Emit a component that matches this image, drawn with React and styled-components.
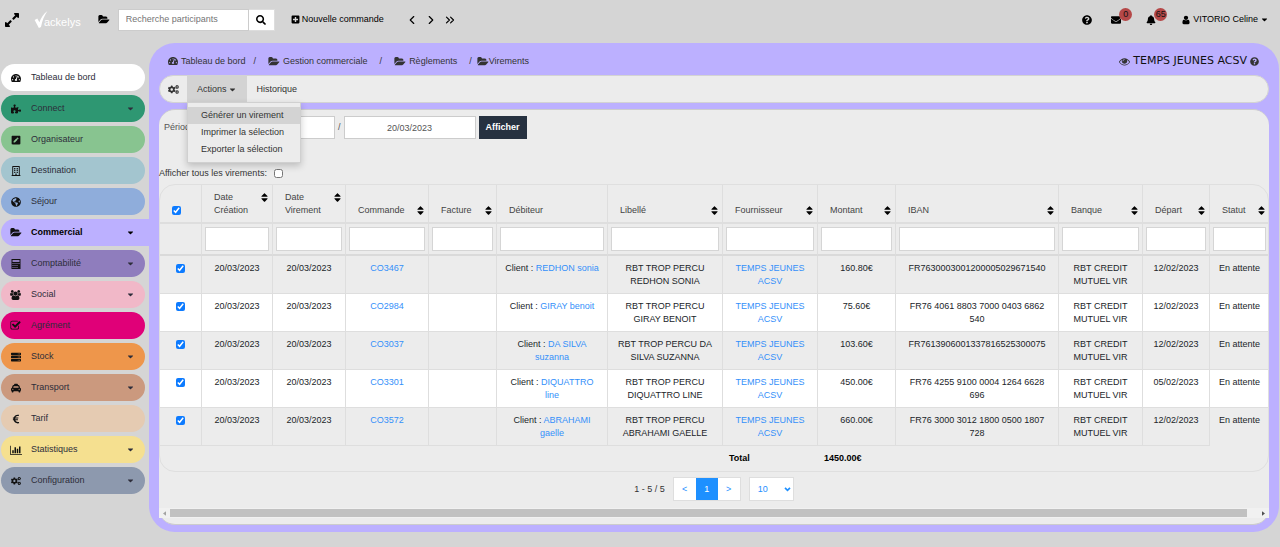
import styled, { createGlobalStyle, css } from 'styled-components'
import { ChevronLeft, ChevronRight, ChevronsRight } from 'lucide-react'
import {
  FaExpandAlt, FaSearch, FaPlusSquare, FaQuestionCircle, FaEnvelope, FaBell, FaCogs,
  FaTachometerAlt, FaPuzzlePiece, FaPenSquare, FaRegBuilding, FaGlobeAmericas,
  FaServer, FaTaxi, FaEuroSign, FaSort, FaCaretDown
} from 'react-icons/fa'

const BarChartIcon = () => (
  <svg viewBox="0 0 2048 1792" width="12" height="11" fill="currentColor" aria-hidden="true">
    <path d="M640 1024v512H384v-512h256zm384-512v1024H768V512h256zm1024 1152v128H0V256h128v1408h1920zm-640-896v768h-256V768h256zm384-384v1152h-256V384h256z" />
  </svg>
)

const CheckSquareIcon = () => (
  <svg viewBox="0 0 1792 1792" width="11" height="11" fill="currentColor" aria-hidden="true">
    <path d="M1472 930v318q0 119-84.5 203.5t-203.5 84.5h-832q-119 0-203.5-84.5t-84.5-203.5v-832q0-119 84.5-203.5t203.5-84.5h832q63 0 117 25 15 7 18 23 3 17-9 29l-49 49q-10 10-23 10-3 0-9-2-23-6-45-6h-832q-66 0-113 47t-47 113v832q0 66 47 113t113 47h832q66 0 113-47t47-113v-254q0-13 9-22l64-64q10-10 23-10 6 0 12 3 20 8 20 29zm231-489l-814 814q-24 24-57 24t-57-24l-430-430q-24-24-24-57t24-57l110-110q24-24 57-24t57 24l263 263 647-647q24-24 57-24t57 24l110 110q24 24 24 57t-24 57z" />
  </svg>
)

const EyeIcon = () => (
  <svg viewBox="0 0 1792 1792" width="11" height="11" fill="currentColor" aria-hidden="true">
    <path d="M1664 960q-152-236-381-353 61 104 61 225 0 185-131.5 316.5t-316.5 131.5-316.5-131.5-131.5-316.5q0-121 61-225-229 117-381 353 133 205 333.5 326.5t434.5 121.5 434.5-121.5 333.5-326.5zm-720-384q0-20-14-34t-34-14q-125 0-214.5 89.5t-89.5 214.5q0 20 14 34t34 14 34-14 14-34q0-86 61-147t147-61q20 0 34-14t14-34zm848 384q0 34-20 69-140 230-376.5 368.5t-499.5 138.5-499.5-139-376.5-368q-20-35-20-69t20-69q140-229 376.5-368t499.5-139 499.5 139 376.5 368q20 35 20 69z" />
  </svg>
)

const FolderIcon = () => (
  <svg viewBox="0 0 2048 1792" width="12" height="11" fill="currentColor" aria-hidden="true">
    <path d="M1943 952q0 31-31 66l-336 396q-43 51-120.5 86.5t-143.5 35.5h-1088q-34 0-60.5-13t-26.5-43q0-31 31-66l336-396q43-51 120.5-86.5t143.5-35.5h1088q34 0 60.5 13t26.5 43zm-343-344v160h-832q-94 0-197 47.5t-164 119.5l-337 396-5 6q0-4-.5-12.5t-.5-12.5v-960q0-92 66-158t158-66h320q92 0 158 66t66 158v32h544q92 0 158 66t66 158z" />
  </svg>
)

const UsersIcon = () => (
  <svg viewBox="0 0 1920 1792" width="11" height="10" fill="currentColor" aria-hidden="true">
    <path d="M593 896q-162 5-265 128H194q-82 0-138-40.5T0 865q0-353 124-353 6 0 43.5 21t97.5 42.5T384 597q67 0 133-23-5 37-5 66 0 139 81 256zm1071 637q0 120-73 189.5t-194 69.5H523q-121 0-194-69.5T256 1533q0-53 3.5-103.5t14-109T300 1212t43-97.5 62-81 85.5-53.5T602 960q10 0 43 21.5t73 48 107 48 135 21.5 135-21.5 107-48 73-48 43-21.5q61 0 111.5 20t85.5 53.5 62 81 43 97.5 26.5 108.5 14 109 3.5 103.5zM640 256q0 106-75 181t-181 75-181-75-75-181 75-181T384 0t181 75 75 181zm704 384q0 159-112.5 271.5T960 1024 688.5 911.5 576 640t112.5-271.5T960 256t271.5 112.5T1344 640zm576 225q0 78-56 118.5t-138 40.5h-134q-103-123-265-128 81-117 81-256 0-29-5-66 66 23 133 23 59 0 119-21.5t97.5-42.5 43.5-21q124 0 124 353zm-128-609q0 106-75 181t-181 75-181-75-75-181 75-181 181-75 181 75 75 181z" />
  </svg>
)

const UserIcon = () => (
  <svg viewBox="0 0 1792 1792" width="10" height="10" fill="currentColor" aria-hidden="true">
    <path d="M1536 1399q0 109-62.5 187t-150.5 78h-854q-88 0-150.5-78t-62.5-187q0-85 8.5-160.5t31.5-152 58.5-131 94-89 134.5-34.5q131 128 313 128t313-128q76 0 134.5 34.5t94 89 58.5 131 31.5 152 8.5 160.5zm-256-887q0 159-112.5 271.5t-271.5 112.5-271.5-112.5-112.5-271.5 112.5-271.5 271.5-112.5 271.5 112.5 112.5 271.5z" />
  </svg>
)

const CalculatorIcon = () => (
  <svg viewBox="0 0 20 20" width="10" height="10" aria-hidden="true">
    <path
      fill="currentColor"
      fillRule="evenodd"
      d="M1 0h18v20H1zM3 2v4h14V2zM3 8v2h2V8zm4 0v2h2V8zm4 0v2h2V8zM3 12v2h2v-2zm4 0v2h2v-2zm4 0v2h2v-2zM3 16v2h2v-2zm4 0v2h2v-2zm4 0v2h2v-2zM15 8v2h2V8z"
    />
  </svg>
)

const menu = [
  { label: 'Tableau de bord', icon: FaTachometerAlt, color: '#ffffff' },
  { label: 'Connect', icon: FaPuzzlePiece, color: '#2e9772', sub: true },
  { label: 'Organisateur', icon: FaPenSquare, color: '#88c490' },
  { label: 'Destination', icon: FaRegBuilding, color: '#a3c5cf' },
  { label: 'Séjour', icon: FaGlobeAmericas, color: '#8faddb' },
  { label: 'Commercial', icon: FolderIcon, color: '#bcb0ff', sub: true, active: true },
  { label: 'Comptabilité', icon: CalculatorIcon, color: '#8f7dbd', sub: true },
  { label: 'Social', icon: UsersIcon, color: '#f1b8c8', sub: true },
  { label: 'Agrément', icon: CheckSquareIcon, color: '#e00078' },
  { label: 'Stock', icon: FaServer, color: '#ee964b', sub: true },
  { label: 'Transport', icon: FaTaxi, color: '#cb997e', sub: true },
  { label: 'Tarif', icon: FaEuroSign, color: '#e5cbb2' },
  { label: 'Statistiques', icon: BarChartIcon, color: '#f5e090', sub: true },
  { label: 'Configuration', icon: FaCogs, color: '#8d99ae', sub: true }
]

const columns = [
  { label: 'Date Création', width: 71, sort: true },
  { label: 'Date Virement', width: 73, sort: true },
  { label: 'Commande', width: 83, sort: true },
  { label: 'Facture', width: 68, sort: true },
  { label: 'Débiteur', width: 111 },
  { label: 'Libellé', width: 115, sort: true },
  { label: 'Fournisseur', width: 95, sort: true },
  { label: 'Montant', width: 78, sort: true },
  { label: 'IBAN', width: 163, sort: true },
  { label: 'Banque', width: 84, sort: true },
  { label: 'Départ', width: 67, sort: true },
  { label: 'Statut', width: 59, sort: true }
]

const rows = [
  { order: 'CO3467', client: 'REDHON sonia', label: 'RBT TROP PERCU REDHON SONIA', amount: '160.80€', iban: 'FR7630003001200005029671540', start: '12/02/2023' },
  { order: 'CO2984', client: 'GIRAY benoit', label: 'RBT TROP PERCU GIRAY BENOIT', amount: '75.60€', iban: 'FR76 4061 8803 7000 0403 6862 540', start: '12/02/2023' },
  { order: 'CO3037', client: 'DA SILVA suzanna', label: 'RBT TROP PERCU DA SILVA SUZANNA', amount: '103.60€', iban: 'FR7613906001337816525300075', start: '12/02/2023' },
  { order: 'CO3301', client: 'DIQUATTRO line', label: 'RBT TROP PERCU DIQUATTRO LINE', amount: '450.00€', iban: 'FR76 4255 9100 0004 1264 6628 696', start: '05/02/2023' },
  { order: 'CO3572', client: 'ABRAHAMI gaelle', label: 'RBT TROP PERCU ABRAHAMI GAELLE', amount: '660.00€', iban: 'FR76 3000 3012 1800 0500 1807 728', start: '12/02/2023' }
]

export default function App() {
  return (
    <>
      <GlobalStyle />
      <TopBar />
      <Layout>
        <Sidebar>
          {menu.map(({ label, icon: Icon, color, sub, active }) => (
            <MenuLink key={label} href="#" $color={color} $active={active}>
              <MenuIcon><Icon /></MenuIcon>
              <MenuLabel>{label}</MenuLabel>
              {sub && <FaCaretDown size={9} />}
            </MenuLink>
          ))}
        </Sidebar>
        <Panel>
          <PanelHead>
            <Breadcrumb>
              <a href="#"><FaTachometerAlt size={10} /> Tableau de bord</a>
              <Slash>/</Slash>
              <a href="#"><FolderIcon /> Gestion commerciale</a>
              <Slash $wide>/</Slash>
              <a href="#"><FolderIcon /> Règlements</a>
              <Slash $wide $tight>/</Slash>
              <Current><FolderIcon />Virements</Current>
            </Breadcrumb>
            <Structure>
              <EyeIcon />
              <strong>TEMPS JEUNES ACSV</strong>
              <FaQuestionCircle size={9} />
            </Structure>
          </PanelHead>
          <Toolbar />
          <Transfers />
        </Panel>
      </Layout>
    </>
  )
}

function TopBar() {
  return (
    <Header>
      <IconButton aria-label="Plein écran"><FaExpandAlt size={16} /></IconButton>
      <Logo href="#">
        <svg viewBox="0 0 26 32" width="14" height="17" aria-hidden="true">
          <path d="M1 17l5-3 4 7C13 13 18 5 25 0c-6 9-10 19-12 30l-4 2z" fill="#fff" />
        </svg>
        <span>ackelys</span>
      </Logo>
      <IconButton aria-label="Dossiers"><FolderIcon /></IconButton>
      <Search>
        <input type="text" aria-label="Recherche participants" placeholder="Recherche participants" />
        <button aria-label="Rechercher"><FaSearch size={10} /></button>
      </Search>
      <NewOrder href="#"><FaPlusSquare size={9} />Nouvelle commande</NewOrder>
      <Arrows>
        <IconButton aria-label="Précédent"><ChevronLeft size={14} /></IconButton>
        <IconButton aria-label="Suivant"><ChevronRight size={14} /></IconButton>
        <IconButton aria-label="Dernier"><ChevronsRight size={14} /></IconButton>
      </Arrows>
      <UserZone>
        <IconButton aria-label="Aide"><FaQuestionCircle size={10} /></IconButton>
        <IconButton aria-label="Messages"><FaEnvelope size={10} /><Badge>0</Badge></IconButton>
        <IconButton $apart aria-label="Notifications"><FaBell size={10} /><Badge>65</Badge></IconButton>
        <UserButton><UserIcon />VITORIO Celine<FaCaretDown size={9} /></UserButton>
      </UserZone>
    </Header>
  )
}

function Toolbar() {
  return (
    <Bar>
      <BarButton $icon aria-label="Paramètres"><FaCogs size={11} /></BarButton>
      <MenuAnchor>
        <BarButton $open>Actions <FaCaretDown size={9} /></BarButton>
        <DropDown>
          <DropItem $selected>Générer un virement</DropItem>
          <DropItem>Imprimer la sélection</DropItem>
          <DropItem>Exporter la sélection</DropItem>
        </DropDown>
      </MenuAnchor>
      <BarButton>Historique</BarButton>
    </Bar>
  )
}

function Transfers() {
  return (
    <Content>
      <Period>
        <label htmlFor="from">Période :</label>
        <DateInput id="from" defaultValue="" />
        <span>/</span>
        <DateInput aria-label="Fin de période" defaultValue="20/03/2023" />
        <Submit>Afficher</Submit>
      </Period>
      <ShowAll>
        Afficher tous les virements: <Check />
      </ShowAll>
      <TableFrame>
        <Table>
          <colgroup>
            <col width="42" />
            {columns.map(c => <col key={c.label} width={c.width} />)}
          </colgroup>
          <thead>
            <tr>
              <HeadCell><Check defaultChecked aria-label="Tout sélectionner" /></HeadCell>
              {columns.map(c => (
                <HeadCell key={c.label}>
                  <HeadLabel>{c.label}{c.sort && <FaSort size={11} />}</HeadLabel>
                </HeadCell>
              ))}
            </tr>
            <tr>
              <FilterCell />
              {columns.map(c => (
                <FilterCell key={c.label}><FilterInput aria-label={c.label} /></FilterCell>
              ))}
            </tr>
          </thead>
          <tbody>
            {rows.map(r => (
              <Row key={r.order}>
                <td><Check defaultChecked aria-label={r.order} /></td>
                <td>20/03/2023</td>
                <td>20/03/2023</td>
                <td><a href="#">{r.order}</a></td>
                <td></td>
                <td>Client : <a href="#">{r.client}</a></td>
                <td>{r.label}</td>
                <td><a href="#">TEMPS JEUNES ACSV</a></td>
                <td>{r.amount}</td>
                <td>{r.iban}</td>
                <td>RBT CREDIT MUTUEL VIR</td>
                <td>{r.start}</td>
                <td>En attente</td>
              </Row>
            ))}
          </tbody>
          <tfoot>
            <tr>
              <TotalCell colSpan={7} />
              <TotalCell>Total</TotalCell>
              <TotalCell>1450.00€</TotalCell>
              <TotalCell colSpan={4} />
            </tr>
          </tfoot>
        </Table>
      </TableFrame>
      <Pagination>
        <span>1 - 5 / 5</span>
        <Pages>
          <PageButton>&lt;</PageButton>
          <PageButton $current>1</PageButton>
          <PageButton>&gt;</PageButton>
        </Pages>
        <PageSize>
          <select aria-label="Lignes par page" defaultValue="10">
            <option>10</option>
            <option>25</option>
            <option>50</option>
          </select>
          <svg viewBox="0 0 8 6" width="7" height="5" aria-hidden="true">
            <path d="M1 1l3 3 3-3" fill="none" stroke="#1e90ff" strokeWidth="2" />
          </svg>
        </PageSize>
      </Pagination>
      <ScrollBar>
        <svg viewBox="0 0 4 6" width="3" height="5" aria-hidden="true"><path d="M4 0v6L0 3z" fill="#a3a3a3" /></svg>
        <ScrollTrack><ScrollThumb /></ScrollTrack>
        <svg viewBox="0 0 4 6" width="3" height="5" aria-hidden="true"><path d="M0 0v6l4-3z" fill="#505050" /></svg>
      </ScrollBar>
    </Content>
  )
}

const GlobalStyle = createGlobalStyle`
  * { box-sizing: border-box; }

  body {
    margin: 0;
    background-color: #d5d5d5;
    color: #333;
    font: 9px/13px "Liberation Sans", Arial, sans-serif;
  }

  html { background-color: #d5d5d5; }

  button, input, select {
    font: inherit;
    color: inherit;
    margin: 0;
  }

  button {
    border: 0;
    background: none;
    padding: 0;
  }

  a {
    color: inherit;
    text-decoration: none;
  }

  svg { flex-shrink: 0; }
`

const Header = styled.header`
  display: flex;
  align-items: center;
  height: 43px;
  padding: 0 11px 4px 4px;
  color: #000;
`

const IconButton = styled.button`
  display: flex;
  position: relative;
  margin-left: ${p => p.$apart ? 6 : 0}px;
`

const Logo = styled.a`
  display: flex;
  align-items: flex-start;
  margin: 0 17px 0 14px;
  color: #fff;
  font-size: 11px;
  line-height: 14px;

  svg { margin-right: -4px; }
  span { padding-top: 4px; }
`

const Search = styled.div`
  display: flex;
  height: 22px;
  margin: 0 16px 0 8px;

  input {
    width: 131px;
    padding: 0 7px;
    border: 1px solid #ccc;
    background-color: #fff;
  }

  input::placeholder { color: #757575; }

  button {
    display: flex;
    align-items: center;
    justify-content: center;
    width: 26px;
    background-color: #fff;
    border: 1px solid #ddd;
    border-left: 0;
  }
`

const NewOrder = styled.a`
  display: flex;
  align-items: center;
  gap: 2px;
`

const Arrows = styled.div`
  display: flex;
  gap: 5px;
  margin-left: 21px;
`

const UserZone = styled.div`
  display: flex;
  align-items: center;
  gap: 19px;
  margin-left: auto;
`

const Badge = styled.span`
  position: absolute;
  left: 8px;
  bottom: 4px;
  min-width: 13px;
  height: 13px;
  border-radius: 7px;
  background-color: #b54848;
  color: #111;
  text-align: center;
`

const UserButton = styled.button`
  display: flex;
  align-items: center;
  gap: 2px;
  margin-left: 6px;
`

const Layout = styled.div`
  display: flex;
  align-items: flex-start;
`

const Sidebar = styled.nav`
  flex: 0 0 149px;
  display: flex;
  flex-direction: column;
  gap: 4px;
  padding: 21px 0 0 1px;
`

const MenuLink = styled.a`
  display: flex;
  align-items: center;
  height: 27px;
  margin-right: 4px;
  padding: 0 10px 0 9px;
  border-radius: 14px;
  background-color: ${p => p.$color};
  color: #2d2d3a;

  ${p => p.$active && css`
    margin-right: 0;
    padding-right: 14px;
    border-radius: 14px 0 0 14px;
    color: #000;
    font-weight: bold;
  `}
`

const MenuIcon = styled.span`
  display: flex;
  justify-content: center;
  width: 11px;
  margin-right: 10px;
  color: #111;
  font-size: 10px;
`

const MenuLabel = styled.span`
  flex: 1;
`

const Panel = styled.main`
  flex: 1;
  min-width: 0;
  margin-right: 1px;
  padding: 0 10px 7px;
  border-radius: 26px;
  background-color: #bcb0ff;
`

const PanelHead = styled.div`
  display: flex;
  justify-content: space-between;
  align-items: center;
  height: 32px;
  padding: 4px 10px 0 9px;
`

const Breadcrumb = styled.nav`
  display: flex;
  align-items: center;

  a {
    display: flex;
    align-items: center;
    gap: 3px;
  }
`

const Slash = styled.span`
  margin: 0 ${p => p.$tight ? 5 : 12}px 0 ${p => p.$wide ? 12 : 8}px;
`

const Current = styled.span`
  display: flex;
  align-items: center;
`

const Structure = styled.div`
  display: flex;
  align-items: center;
  gap: 3px;

  strong {
    color: #111;
    font: 500 11px/14px "Comic Sans MS", "DejaVu Sans", sans-serif;
  }
`

const Bar = styled.div`
  display: flex;
  height: 28px;
  border: 1px solid #d3d3d3;
  border-radius: 14px;
  background-color: #ececec;
`

const BarButton = styled.button`
  display: flex;
  align-items: center;
  gap: 1px;
  height: 100%;
  padding: 0 ${p => p.$icon ? 8 : 10}px;
  background-color: ${p => p.$open ? '#d3d3d3' : 'transparent'};
`

const MenuAnchor = styled.div`
  position: relative;
`

const DropDown = styled.div`
  position: absolute;
  z-index: 2;
  top: 100%;
  left: 0;
  min-width: 114px;
  padding: 4px 0;
  border: 1px solid #d0d0d0;
  background-color: #ececec;
  box-shadow: 0 3px 7px rgba(0, 0, 0, .2);
`

const DropItem = styled.button`
  display: block;
  width: 100%;
  padding: 2px 13px;
  background-color: ${p => p.$selected ? '#d3d3d3' : 'transparent'};
  text-align: left;
  white-space: nowrap;
`

const Content = styled.section`
  margin-top: 6px;
  padding-top: 6px;
  border: 1px solid #ccc;
  border-width: 1px 0;
  border-radius: 16px;
  background-color: #ececec;
`

const Period = styled.div`
  display: flex;
  align-items: center;
  gap: 3px;
  padding-left: 5px;
  color: #555;
`

const DateInput = styled.input`
  width: 132px;
  height: 23px;
  border: 1px solid #ccc;
  background-color: #fff;
  text-align: center;
`

const Submit = styled.button`
  height: 23px;
  padding: 0 7px;
  background-color: #263140;
  color: #fff;
  font-weight: bold;
`

const ShowAll = styled.label`
  display: flex;
  align-items: center;
  gap: 7px;
  padding: 28px 0 4px;
`

const Check = styled.input.attrs({ type: 'checkbox' })`
  width: 9px;
  height: 9px;
  accent-color: #0d7bff;
  vertical-align: middle;
`

const TableFrame = styled.div`
  border: 1px solid #dfdfdf;
  border-radius: 16px;
  overflow: hidden;
`

const Table = styled.table`
  width: 100%;
  table-layout: fixed;
  border-collapse: separate;
  border-spacing: 0;
`

const HeadCell = styled.th`
  padding: 6px 2px 5px 12px;
  border-right: 1px solid #dedede;
  border-bottom: 2px solid #dedede;
  font-weight: normal;
  text-align: left;
  vertical-align: bottom;

  &:last-child { border-right: 0; }
`

const HeadLabel = styled.span`
  display: flex;
  justify-content: space-between;
  color: #444;

  svg {
    margin-top: 1px;
    color: #000;
  }
`

const FilterCell = styled.th`
  padding: 3px;
  border-right: 1px solid #dedede;
  border-bottom: 2px solid #dadada;

  &:last-child { border-right: 0; }
`

const FilterInput = styled.input`
  display: block;
  width: 100%;
  height: 24px;
  border: 1px solid #d5d5d5;
  background-color: #fff;
`

const Row = styled.tr`
  color: #212529;
  text-align: center;

  &:nth-child(even) { background-color: #fff; }

  td {
    padding: 6px 6px 5px;
    border-right: 1px solid #dedede;
    border-bottom: 1px solid #dedede;
    vertical-align: top;
  }

  td:last-child { border-right: 0; }
  &:last-child td:last-child { border-bottom: 0; }

  a { color: #3490fa; }
`

const TotalCell = styled.td`
  height: 25px;
  padding: 0 6px;
  color: #000;
  font-weight: bold;
`

const Pagination = styled.div`
  display: flex;
  justify-content: center;
  align-items: center;
  gap: 8px;
  padding: 5px 0 7px;
`

const Pages = styled.div`
  display: flex;
  border: 1px solid #dedede;
`

const PageButton = styled.button`
  width: 22px;
  height: 22px;
  background-color: ${p => p.$current ? '#1e90ff' : '#fff'};
  color: ${p => p.$current ? '#fff' : '#1e90ff'};
`

const PageSize = styled.span`
  display: grid;
  align-items: center;

  select, svg { grid-area: 1 / 1; }

  select {
    appearance: none;
    width: 45px;
    height: 24px;
    padding: 0 8px;
    border: 1px solid #dedede;
    border-radius: 0;
    background-color: #fff;
    color: #1e90ff;
  }

  svg {
    justify-self: end;
    margin-right: 3px;
    pointer-events: none;
  }
`

const ScrollBar = styled.div`
  display: flex;
  align-items: center;
  gap: 4px;
  height: 10px;
  margin-bottom: 6px;
  padding: 0 4px;
  background-color: #f1f1f1;
`

const ScrollTrack = styled.div`
  flex: 1;
`

const ScrollThumb = styled.div`
  width: 99%;
  height: 8px;
  background-color: #c1c1c1;
`
